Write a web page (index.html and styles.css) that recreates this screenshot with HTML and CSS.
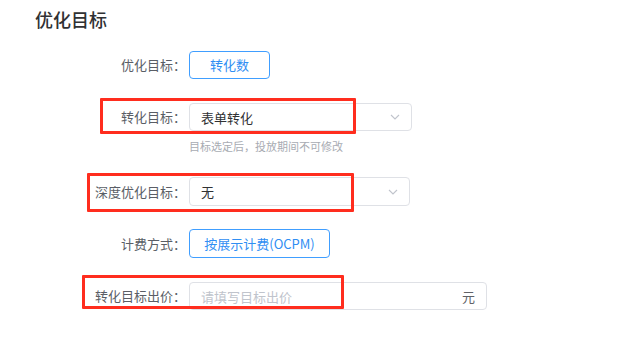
FILE: index.html
```html
<!DOCTYPE html>
<html lang="zh-CN">
<head>
<meta charset="utf-8">
<link rel="stylesheet" href="styles.css">
</head>
<body>
<div class="page">
  <h2 class="title">优化目标</h2>
  <div class="form">
    <div class="row r1">
      <div class="label">优化目标：</div>
      <div class="control">
        <button class="btn btn-goal">转化数</button>
      </div>
    </div>
    <div class="row r2">
      <div class="label">转化目标：</div>
      <div class="control">
        <div class="select s-conv">
          <span class="value">表单转化</span>
          <svg class="chev" width="10" height="6" viewBox="0 0 10 6"><path d="M1 1 L5 5 L9 1" fill="none" stroke="#c0c4cc" stroke-width="1.1"/></svg>
        </div>
        <div class="hint">目标选定后，投放期间不可修改</div>
      </div>
      <div class="mark m2"></div>
    </div>
    <div class="row r3">
      <div class="label">深度优化目标：</div>
      <div class="control">
        <div class="select s-deep">
          <span class="value">无</span>
          <svg class="chev" width="10" height="6" viewBox="0 0 10 6"><path d="M1 1 L5 5 L9 1" fill="none" stroke="#c0c4cc" stroke-width="1.1"/></svg>
        </div>
      </div>
      <div class="mark m3"></div>
    </div>
    <div class="row r4">
      <div class="label">计费方式：</div>
      <div class="control">
        <button class="btn btn-bill">按展示计费(OCPM)</button>
      </div>
    </div>
    <div class="row r5">
      <div class="label">转化目标出价：</div>
      <div class="control">
        <div class="input">
          <span class="placeholder">请填写目标出价</span>
          <span class="unit">元</span>
        </div>
      </div>
      <div class="mark m5"></div>
    </div>
  </div>
</div>
</body>
</html>
```

FILE: styles.css
```css
html, body {
  margin: 0;
  padding: 0;
  background: #ffffff;
}
body {
  font-family: "Noto Sans CJK SC", "Noto Sans", sans-serif;
  color: #606266;
}
.page {
  padding-top: 7px;
}
.title {
  margin: 0 0 20px 35px;
  font-size: 18px;
  font-weight: 500;
  line-height: 24px;
  color: #303133;
}
.row {
  position: relative;
  display: flex;
  align-items: flex-start;
}
.label {
  box-sizing: border-box;
  width: 189px;
  padding-right: 3px;
  text-align: right;
  font-size: 13px;
  color: #5a5e66;
  white-space: nowrap;
}
.control {
  display: flex;
  flex-direction: column;
}
.btn {
  box-sizing: border-box;
  height: 28px;
  border: 1px solid #409eff;
  border-radius: 4px;
  background: #fff;
  color: #2f8ef3;
  font-family: inherit;
  font-size: 13px;
  padding: 0;
  line-height: 26px;
}
.btn-goal { width: 81px; }
.btn-bill { width: 141px; height: 29px; }
.r1 .label, .r4 .label { line-height: 28px; }
.r1 { margin-bottom: 24px; }
.r2 { margin-bottom: 23px; }
.r2 .label { line-height: 28px; }
.r3 { margin-bottom: 23px; }
.r3 .label { line-height: 29px; }
.r4 { margin-bottom: 24px; }
.r4 .label { line-height: 29px; }
.r5 .label { line-height: 28px; }
.select, .input {
  box-sizing: border-box;
  display: flex;
  align-items: center;
  justify-content: space-between;
  border: 1px solid #dfe1e6;
  border-radius: 4px;
  background: #fff;
  padding: 0 11px 0 11px;
  font-size: 13px;
}
.s-conv { width: 223px; height: 28px; }
.s-deep { width: 221px; height: 29px; }
.value { color: #303133; }
.chev { display: block; }
.hint {
  margin-top: 7px;
  font-size: 11px;
  line-height: 16px;
  color: #a8abb2;
}
.input { width: 298px; height: 28px; }
.placeholder { color: #c0c4cc; }
.unit { color: #606266; }
.mark {
  position: absolute;
  box-sizing: border-box;
  border: 3px solid #ff2d1e;
  border-radius: 1px;
  pointer-events: none;
}
.m2 { left: 100px; top: -5px; width: 256px; height: 36px; }
.m3 { left: 87px; top: -4px; width: 267px; height: 39px; }
.m5 { left: 82px; top: -7px; width: 262px; height: 34px; }
```
